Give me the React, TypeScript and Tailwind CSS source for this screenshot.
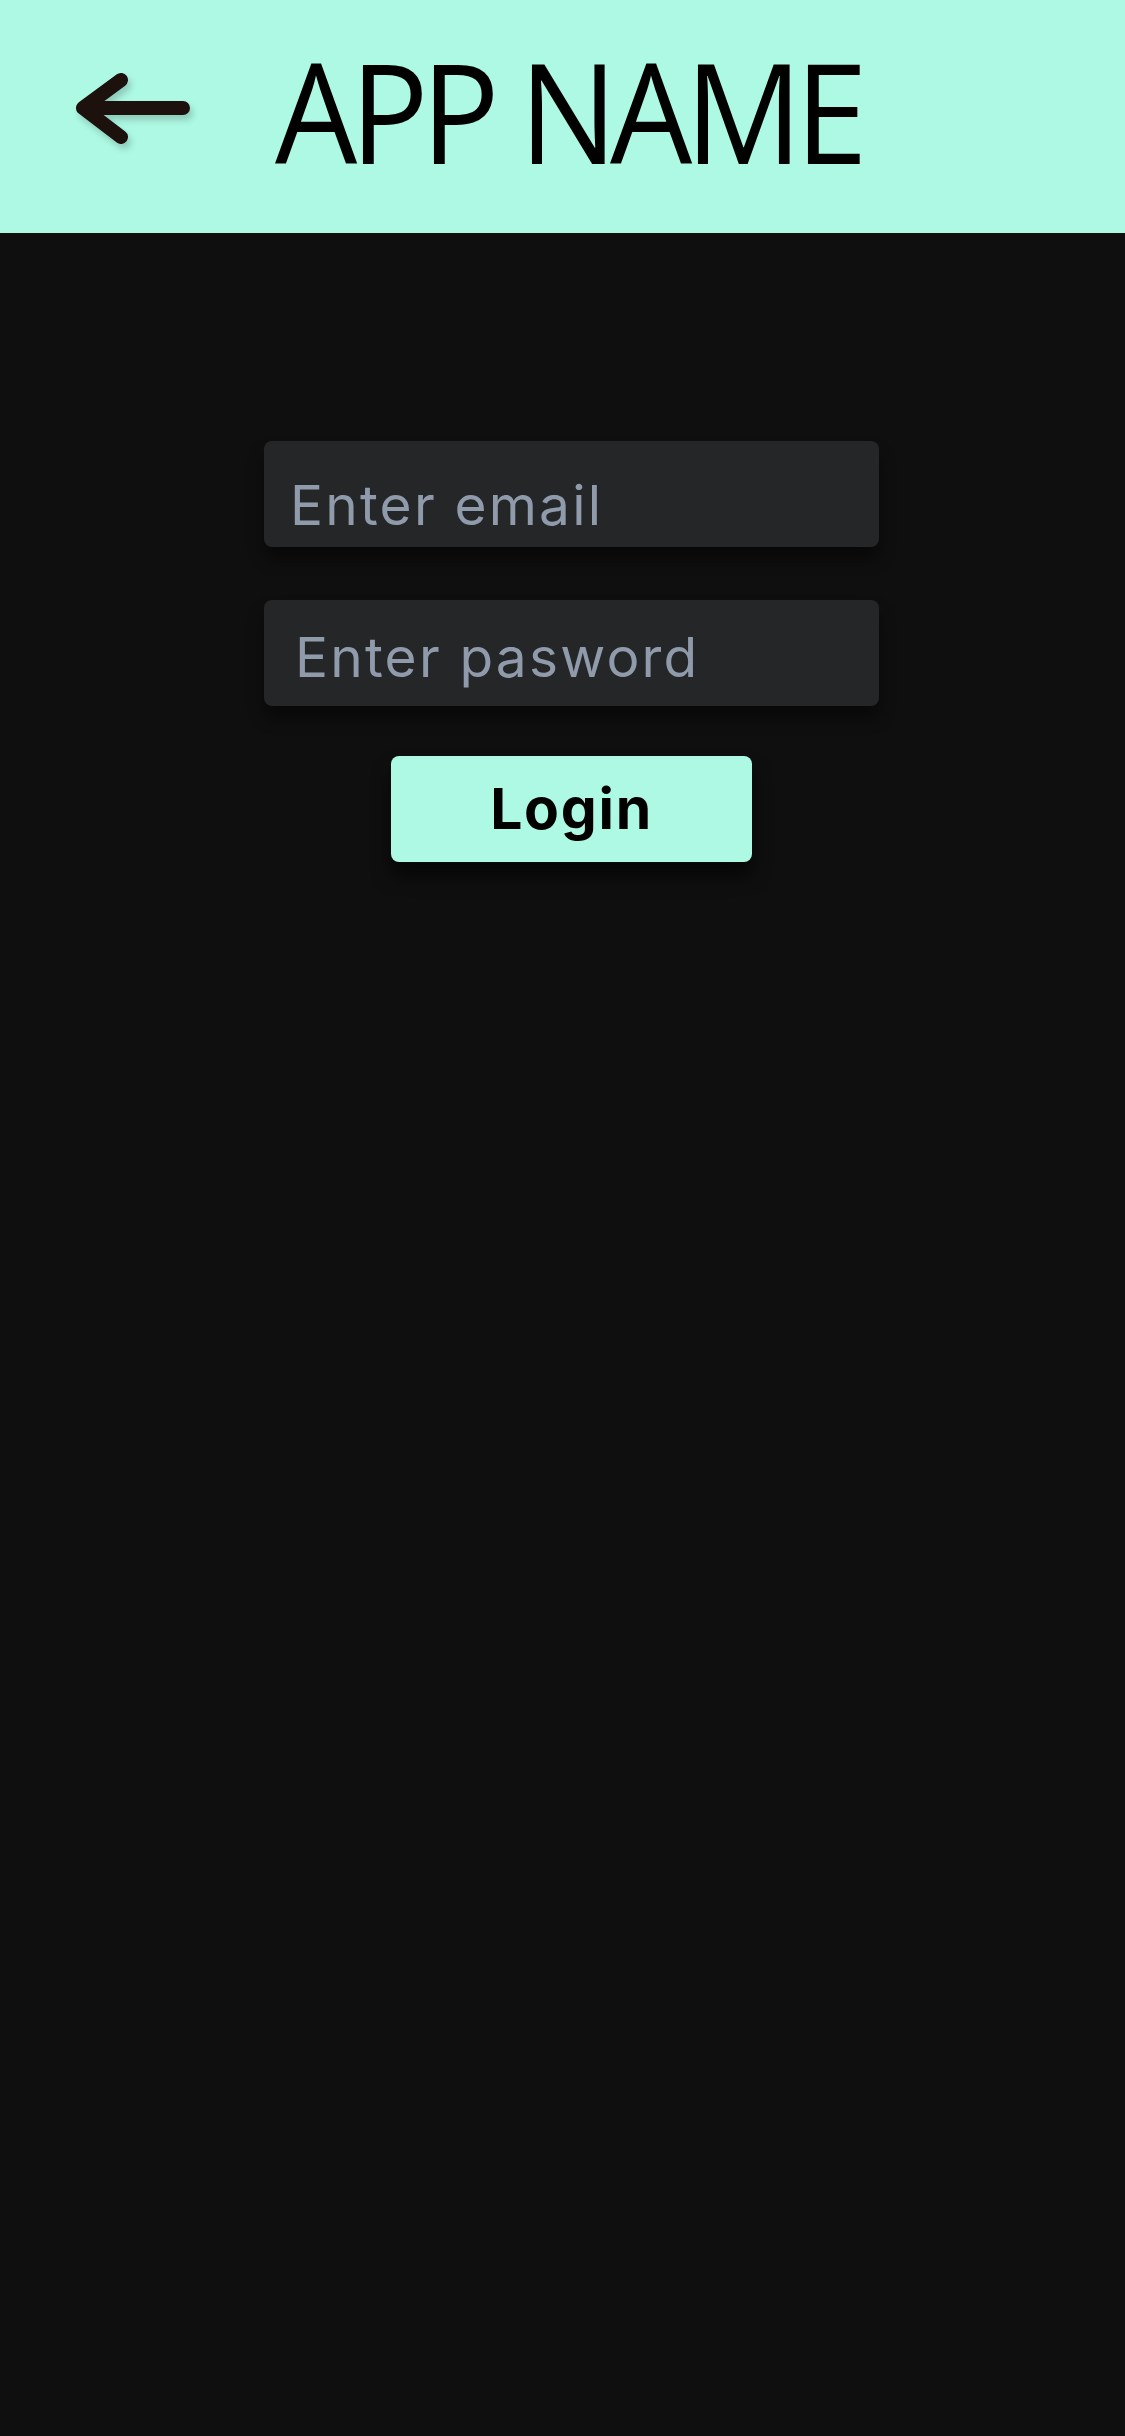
export default function App() {
  return (
    <div className="min-h-[2436px] w-full bg-[#0f0f0f]" style={{ fontFamily: 'Inter, "Noto Sans", sans-serif' }}>
      <header className="flex h-[233px] items-center bg-[#adf9e3] pl-[72px]">
        <svg width="124" height="80" viewBox="0 0 124 80" className="-mt-[16px] drop-shadow-[3px_5px_3px_rgba(0,0,0,0.18)]">
          <path
            d="M11 39 L49 11 M11 39 L49 68 M11 39 L111 39"
            fill="none"
            stroke="#1c110d"
            strokeWidth="14"
            strokeLinecap="round"
            strokeLinejoin="round"
          />
        </svg>
        <h1
          className="-mt-[14px] ml-[79px] origin-left scale-x-[0.93] text-[140px] font-normal leading-none tracking-[-0.055em] text-black"
          style={{ fontFamily: '"Open Sans", sans-serif' }}
        >
          APP NAME
        </h1>
      </header>

      <main className="flex flex-col items-center pl-[18px] pt-[208px]">
        <input
          type="email"
          placeholder="Enter email"
          className="h-[106px] w-[615px] rounded-[8px] bg-[#252628] pl-[26px] pt-[22px] text-[55px] tracking-[0.04em] text-white shadow-[0_12px_16px_rgba(0,0,0,0.45)] outline-none placeholder:text-[#8f9aaa]"
        />
        <input
          type="password"
          placeholder="Enter pasword"
          className="mt-[53px] h-[106px] w-[615px] rounded-[8px] bg-[#252628] pl-[31px] pt-[8px] text-[55px] tracking-[0.04em] text-white shadow-[0_12px_16px_rgba(0,0,0,0.45)] outline-none placeholder:text-[#8f9aaa]"
        />
        <button className="mt-[50px] flex h-[106px] w-[361px] items-center justify-center rounded-[8px] bg-[#adf9e3] text-[57px] font-bold tracking-[0.03em] text-black shadow-[0_14px_18px_rgba(0,0,0,0.6)]">
          Login
        </button>
      </main>
    </div>
  );
}
